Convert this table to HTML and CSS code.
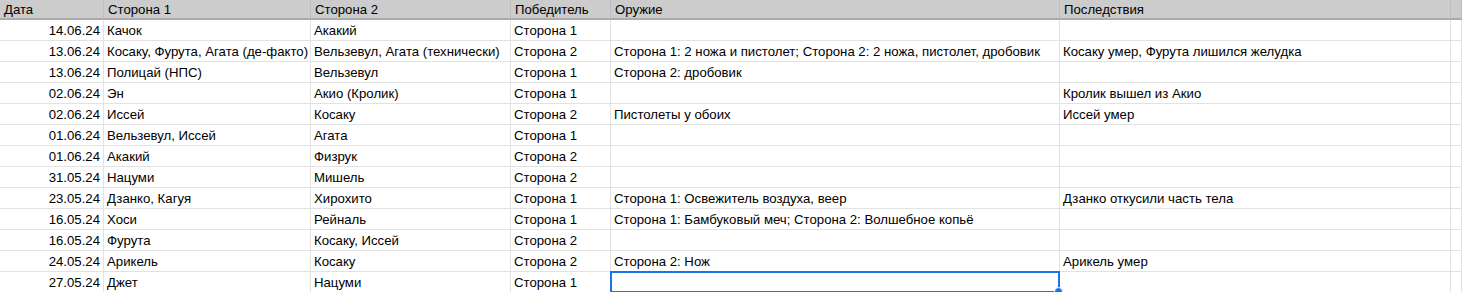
FILE: index.html
```html
<!DOCTYPE html>
<html lang="ru">
<head>
<meta charset="utf-8">
<link rel="stylesheet" href="styles.css">
</head>
<body>
<div class="sheet">
  <div class="row head">
    <div class="c">Дата</div><div class="c">Сторона 1</div><div class="c">Сторона 2</div><div class="c">Победитель</div><div class="c">Оружие</div><div class="c">Последствия</div><div class="c"></div>
  </div>
  <div class="row"><div class="c num">14.06.24</div><div class="c">Качок</div><div class="c">Акакий</div><div class="c">Сторона 1</div><div class="c"></div><div class="c"></div><div class="c"></div></div>
  <div class="row"><div class="c num">13.06.24</div><div class="c">Косаку, Фурута, Агата (де-факто)</div><div class="c">Вельзевул, Агата (технически)</div><div class="c">Сторона 2</div><div class="c">Сторона 1: 2 ножа и пистолет; Сторона 2: 2 ножа, пистолет, дробовик</div><div class="c">Косаку умер, Фурута лишился желудка</div><div class="c"></div></div>
  <div class="row"><div class="c num">13.06.24</div><div class="c">Полицай (НПС)</div><div class="c">Вельзевул</div><div class="c">Сторона 1</div><div class="c">Сторона 2: дробовик</div><div class="c"></div><div class="c"></div></div>
  <div class="row"><div class="c num">02.06.24</div><div class="c">Эн</div><div class="c">Акио (Кролик)</div><div class="c">Сторона 1</div><div class="c"></div><div class="c">Кролик вышел из Акио</div><div class="c"></div></div>
  <div class="row"><div class="c num">02.06.24</div><div class="c">Иссей</div><div class="c">Косаку</div><div class="c">Сторона 2</div><div class="c">Пистолеты у обоих</div><div class="c">Иссей умер</div><div class="c"></div></div>
  <div class="row"><div class="c num">01.06.24</div><div class="c">Вельзевул, Иссей</div><div class="c">Агата</div><div class="c">Сторона 1</div><div class="c"></div><div class="c"></div><div class="c"></div></div>
  <div class="row"><div class="c num">01.06.24</div><div class="c">Акакий</div><div class="c">Физрук</div><div class="c">Сторона 2</div><div class="c"></div><div class="c"></div><div class="c"></div></div>
  <div class="row"><div class="c num">31.05.24</div><div class="c">Нацуми</div><div class="c">Мишель</div><div class="c">Сторона 2</div><div class="c"></div><div class="c"></div><div class="c"></div></div>
  <div class="row"><div class="c num">23.05.24</div><div class="c">Дзанко, Кагуя</div><div class="c">Хирохито</div><div class="c">Сторона 1</div><div class="c">Сторона 1: Освежитель воздуха, веер</div><div class="c">Дзанко откусили часть тела</div><div class="c"></div></div>
  <div class="row"><div class="c num">16.05.24</div><div class="c">Хоси</div><div class="c">Рейналь</div><div class="c">Сторона 1</div><div class="c">Сторона 1: Бамбуковый меч; Сторона 2: Волшебное копьё</div><div class="c"></div><div class="c"></div></div>
  <div class="row"><div class="c num">16.05.24</div><div class="c">Фурута</div><div class="c">Косаку, Иссей</div><div class="c">Сторона 2</div><div class="c"></div><div class="c"></div><div class="c"></div></div>
  <div class="row"><div class="c num">24.05.24</div><div class="c">Арикель</div><div class="c">Косаку</div><div class="c">Сторона 2</div><div class="c">Сторона 2: Нож</div><div class="c">Арикель умер</div><div class="c"></div></div>
  <div class="row"><div class="c num">27.05.24</div><div class="c">Джет</div><div class="c">Нацуми</div><div class="c">Сторона 1</div><div class="c sel"><span class="selbox"><span class="handle"></span></span></div><div class="c"></div><div class="c"></div></div>
</div>
</body>
</html>
```

FILE: styles.css
```css
html, body {
  margin: 0;
  padding: 0;
  background: #ffffff;
}
body {
  font-family: "Liberation Sans", Arial, sans-serif;
  font-size: 13.2px;
  color: #000000;
  overflow: hidden;
}
.sheet {
  display: flex;
  flex-direction: column;
  width: 1462px;
}
.row {
  display: grid;
  grid-template-columns: 104px 207px 200px 100px 449px 391px 1fr;
  height: 21px;
}
.c {
  box-sizing: border-box;
  border-right: 1px solid #e2e2e2;
  border-bottom: 1px solid #e2e2e2;
  padding: 1px 2px 0 3px;
  line-height: 19px;
  white-space: nowrap;
  overflow: hidden;
}
.num {
  text-align: right;
  padding-right: 3px;
}
.head {
  height: 20px;
}
.head .c {
  background: #cccccc;
  border-bottom: 2px solid #ababab;
  border-right-color: #bdbdbd;
  padding-top: 1px;
  line-height: 17px;
  padding-left: 4px;
}
.sel {
  position: relative;
  overflow: visible;
}
.selbox {
  position: absolute;
  left: -1px;
  top: -1px;
  right: -1px;
  bottom: -1px;
  border: 2px solid #1a73e8;
  pointer-events: none;
}
.handle {
  position: absolute;
  right: -5px;
  bottom: -5px;
  width: 7px;
  height: 7px;
  border-radius: 50%;
  background: #1a73e8;
  border: 1px solid #ffffff;
}
```
